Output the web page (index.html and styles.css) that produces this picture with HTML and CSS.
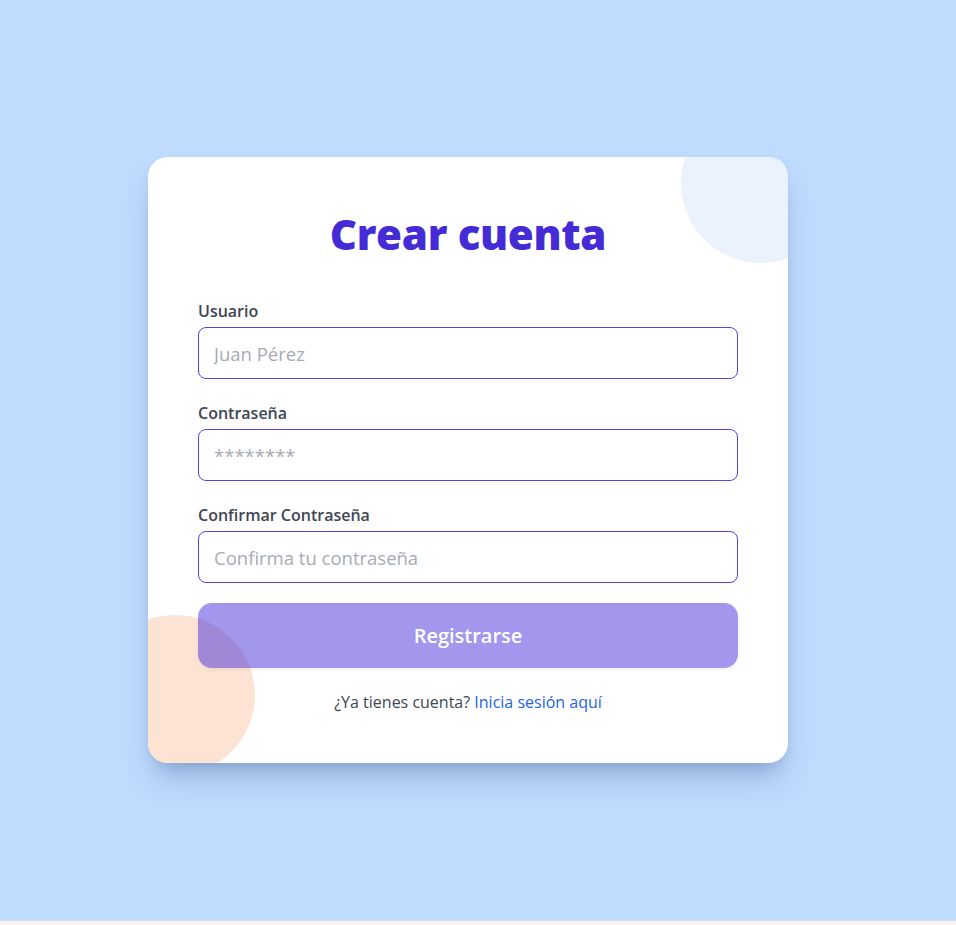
FILE: index.html
```html
<!DOCTYPE html>
<html lang="es">
<head>
<meta charset="utf-8">
<title>Crear cuenta</title>
<link rel="stylesheet" href="styles.css">
</head>
<body>
<main class="page">
  <section class="card">
    <span class="blob blob-blue"></span>
    <span class="blob blob-peach"></span>
    <h1 class="title">Crear cuenta</h1>
    <form class="form">
      <div class="field">
        <label class="label" for="u">Usuario</label>
        <input class="input" id="u" type="text" placeholder="Juan Pérez">
      </div>
      <div class="field">
        <label class="label" for="p">Contraseña</label>
        <input class="input" id="p" type="password" placeholder="********">
      </div>
      <div class="field">
        <label class="label" for="c">Confirmar Contraseña</label>
        <input class="input" id="c" type="password" placeholder="Confirma tu contraseña">
      </div>
      <button class="btn" type="button">Registrarse</button>
    </form>
    <p class="foot">¿Ya tienes cuenta? <a class="link" href="#">Inicia sesión aquí</a></p>
  </section>
</main>
</body>
</html>
```

FILE: styles.css
```css
* { box-sizing: border-box; }
html, body { margin: 0; padding: 0; }
body {
  background: #f4f4f4;
  font-family: "Open Sans", "Noto Sans", sans-serif;
  height: 925px;
  overflow: hidden;
}
.page {
  height: 921px;
  background: #bfdbfe;
  border-bottom: 1px solid #d9dde3;
  display: flex;
  align-items: center;
  justify-content: center;
  padding-right: 20px;
}
.card {
  position: relative;
  width: 640px;
  height: 606px;
  background: #ffffff;
  border-radius: 20px;
  padding: 50px 50px 0;
  overflow: hidden;
  box-shadow: 0 20px 30px -8px rgba(60, 90, 140, 0.35), 0 8px 14px -6px rgba(60, 90, 140, 0.2);
}
.blob {
  position: absolute;
  width: 160px;
  height: 160px;
  border-radius: 50%;
}
.blob-blue {
  top: -54px;
  right: -53px;
  background: #eaf2fe;
}
.blob-peach {
  left: -53px;
  top: 458px;
  background: #fde3d3;
}
.title {
  position: relative;
  margin: 0 0 35px;
  text-align: center;
  font-size: 42px;
  line-height: 53px;
  font-weight: 800;
  color: #452bd6;
  letter-spacing: -0.3px;
}
.form {
  position: relative;
  display: flex;
  flex-direction: column;
  gap: 18px;
}
.field {
  display: flex;
  flex-direction: column;
  gap: 4px;
}
.label {
  padding-top: 4px;
  font-size: 16px;
  line-height: 24px;
  font-weight: 600;
  color: #3f4654;
}
.input {
  height: 52px;
  width: 100%;
  border: 1px solid #5a3ff0;
  border-radius: 8px;
  padding: 0 15px;
  font-family: inherit;
  font-size: 18.5px;
  color: #374151;
  background: #fff;
  outline: none;
}
.input::placeholder { color: #a7abb3; }
.btn {
  margin-top: 2px;
  height: 65px;
  width: 100%;
  border: none;
  border-radius: 14px;
  background: rgba(70, 45, 220, 0.5);
  color: #ffffff;
  font-family: inherit;
  font-size: 20px;
  font-weight: 600;
  box-shadow: 0 2px 4px rgba(0, 0, 0, 0.06);
}
.foot {
  position: relative;
  margin: 22px 0 0;
  text-align: center;
  font-size: 16px;
  line-height: 24px;
  color: #404756;
}
.link {
  color: #2463eb;
  text-decoration: none;
}
```
